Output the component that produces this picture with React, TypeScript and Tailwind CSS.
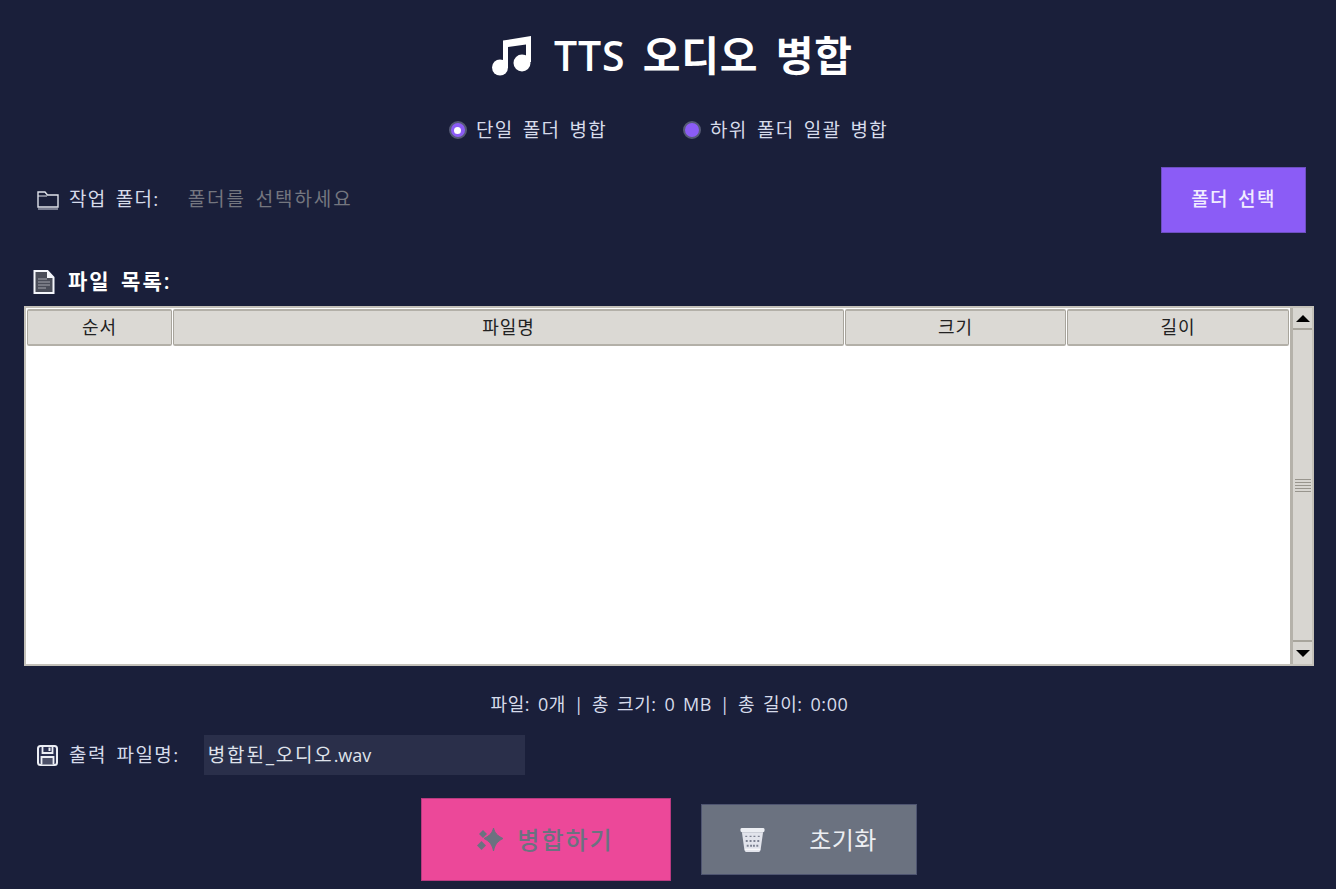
const FONT = "font-['Open_Sans','Noto_Sans_CJK_KR',sans-serif]";
const LABEL = "text-[19px] tracking-[1.3px] [word-spacing:3px]";

function Radio({ label, dot }: { label: string; dot?: boolean }) {
  return (
    <div className="flex items-center gap-[9px]">
      <span className="flex h-[18px] w-[18px] items-center justify-center rounded-full border-2 border-[#565b76] bg-[#8b5cf6]">
        {dot && <span className="h-[7px] w-[7px] rounded-full bg-white" />}
      </span>
      <span className={`${LABEL} leading-[24px] text-[#d6dbea]`}>{label}</span>
    </div>
  );
}

function MusicIcon() {
  return (
    <svg width="41" height="41" viewBox="6 5 41 41" fill="white">
      <path d="M18 10.500 46 6v26h-5V14.500l-18 2.500V38h-5z" />
      <circle cx="15" cy="37.500" r="8" />
      <circle cx="37" cy="33" r="8.500" />
    </svg>
  );
}

function FolderIcon() {
  return (
    <svg width="22" height="20" viewBox="0 0 22 20" fill="none" stroke="#dfe2ea" strokeWidth="1.400">
      <path d="M1 17V2h7l2.500 3H21v12z" />
      <path d="M1 6h9" strokeWidth="1" />
      <path d="M1 19h20" stroke="#8f93a6" strokeWidth="1.600" />
    </svg>
  );
}

function DocIcon() {
  return (
    <svg width="22" height="24" viewBox="0 0 22 24">
      <path d="M1.500 1h13l6 6.500V23h-19z" fill="#4a4d59" stroke="#f4f6fb" strokeWidth="2" />
      <path d="M14 1v7h7" fill="#f4f6fb" />
      <path d="M5 9h9M5 12h12M5 15h12M5 18h8" stroke="#a3a5ae" strokeWidth="1" />
    </svg>
  );
}

function SaveIcon() {
  return (
    <svg width="21" height="21" viewBox="0 0 21 21" fill="none">
      <rect x="1" y="1" width="19" height="19" rx="2.500" fill="#2b3050" stroke="#eceef4" strokeWidth="2" />
      <path d="M5.500 1.500v6.500h10V1.500" stroke="#eceef4" strokeWidth="1.800" />
      <rect x="11.500" y="2.500" width="2" height="3.500" fill="#eceef4" />
      <path d="M4.500 19.500v-7.500h12v7.500" fill="#4c5068" stroke="#eceef4" strokeWidth="1.800" />
    </svg>
  );
}

function SparkleIcon() {
  return (
    <svg width="26" height="23" viewBox="0 0 26 23" fill="#6b7280">
      <path d="M16.500 0c1.200 5 3.600 7.600 9.500 10.500-5.900 2.900-8.300 6.500-9.500 12.500-1.200-6-3.600-9.600-9.500-12.500C12.900 7.600 15.300 5 16.500 0z" stroke="#6b7280" strokeWidth="1" />
      <path d="M6 2l4 4-4 4-4-4z" />
      <path d="M4.500 13l4.500 4.500-4.500 4.500L0 17.500z" />
    </svg>
  );
}

function TrashIcon() {
  return (
    <svg width="25" height="26" viewBox="0 0 26 26">
      <rect x="0.500" y="0.500" width="25" height="4.500" rx="1.500" fill="#eceef3" />
      <path d="M2 5h22l-2.500 17.500q-.3 3-3 3h-11q-2.700 0-3-3z" fill="#e2e4ec" />
      <path d="M6.500 8.500v1.500M11 8.500v1.500M15 8.500v1.500M19.500 8.500v1.500M7 13v2M11 13v2M15 13v2M19 13v2M8 18v2M11.500 18v2M14.500 18v2M18 18v2" stroke="#7d8292" strokeWidth="2" />
      <rect x="5" y="22" width="16" height="1.500" fill="#f8f9fb" />
    </svg>
  );
}

function HeaderCell({ label, width }: { label: string; width: string }) {
  return (
    <div className={`flex h-[37px] items-center justify-center rounded-[2px] border-x border-y-2 border-x-[#a8a59c] border-y-[#b3b0a8] bg-[#dbd9d4] text-[18px] tracking-[1px] text-[#222] ${width}`}>
      {label}
    </div>
  );
}

function ScrollBar() {
  return (
    <div className="flex w-[22px] flex-col border-l-[3px] border-[#b5b2aa] bg-[#d8d6d1]">
      <div className="flex h-[22px] items-center justify-center border-b-2 border-[#a8a59c]">
        <span className="h-0 w-0 border-x-[7px] border-b-[7px] border-x-transparent border-b-black" />
      </div>
      <div className="flex flex-1 flex-col items-center justify-center gap-[2px]">
        <span className="h-px w-[16px] bg-[#98958d]" />
        <span className="h-px w-[16px] bg-[#98958d]" />
        <span className="h-px w-[16px] bg-[#98958d]" />
        <span className="h-px w-[16px] bg-[#98958d]" />
        <span className="h-px w-[16px] bg-[#98958d]" />
      </div>
      <div className="flex h-[24px] items-center justify-center border-t-2 border-[#a8a59c]">
        <span className="h-0 w-0 border-x-[7px] border-t-[7px] border-x-transparent border-t-black" />
      </div>
    </div>
  );
}

export default function App() {
  return (
    <div className={`h-[889px] w-[1336px] overflow-hidden bg-[#1a1f3a] ${FONT}`}>
      <div className="flex h-[110px] items-center justify-center gap-[22px] pl-[8px]">
        <MusicIcon />
        <h1 className="text-[41px] font-semibold leading-[44px] tracking-[0.8px] [word-spacing:6px] text-white">TTS 오디오 병합</h1>
      </div>

      <div className="flex h-[40px] items-center justify-center gap-[76px] pl-[1px]">
        <Radio label="단일 폴더 병합" dot />
        <Radio label="하위 폴더 일괄 병합" />
      </div>

      <div className="mt-[17px] flex h-[65px] items-center pl-[37px] pr-[30px]">
        <FolderIcon />
        <span className={`ml-[10px] ${LABEL} text-[#d6dbea]`}>작업 폴더:</span>
        <span className="ml-[28px] text-[19px] tracking-[1.9px] [word-spacing:3px] text-[#74767f]">폴더를 선택하세요</span>
        <button className={`ml-auto h-[66px] w-[145px] border border-[#6d4fc0] bg-[#8b5cf6] ${LABEL} font-medium text-[#f1ecff]`}>
          폴더 선택
        </button>
      </div>

      <div className="mt-[34px] flex h-[32px] items-center gap-[13px] pl-[33px]">
        <DocIcon />
        <span className="text-[21px] font-semibold tracking-[2px] [word-spacing:3px] text-white">파일 목록:</span>
      </div>

      <div className="ml-[24px] mr-[22px] mt-[8px] flex h-[360px] border-2 border-[#c4c1b9] bg-white">
        <div className="flex-1 bg-white pl-px pt-px">
          <div className="flex gap-px">
            <HeaderCell label="순서" width="w-[145px]" />
            <HeaderCell label="파일명" width="w-[671px]" />
            <HeaderCell label="크기" width="w-[221px]" />
            <HeaderCell label="길이" width="w-[222px]" />
          </div>
        </div>
        <ScrollBar />
      </div>

      <div className="flex h-[76px] items-center justify-center pl-[3px] text-[18px] tracking-[0.6px] [word-spacing:2.500px] text-[#d6dbea]">
        파일: 0개 | 총 크기: 0 MB | 총 길이: 0:00
      </div>

      <div className="-mt-[7px] flex h-[40px] items-center pl-[37px]">
        <SaveIcon />
        <span className="ml-[11px] text-[19px] tracking-[1.5px] [word-spacing:3px] text-[#d6dbea]">출력 파일명:</span>
        <div className="ml-[24px] flex h-[40px] w-[321px] items-center bg-[#2a2f4a] pl-[4px] text-[18px] text-[#dfe2ea]">
          <span className="text-[19px] tracking-[1.800px]">병합된_오디오</span>.wav
        </div>
      </div>

      <div className="mt-[23px] flex items-center justify-center gap-[30px] pl-[1px]">
        <button className="flex h-[83px] w-[250px] items-center justify-center gap-[14px] border border-[#b83a80] bg-[#ec4899] text-[24px] font-medium tracking-[2px] text-[#6b7280]">
          <SparkleIcon />
          병합하기
        </button>
        <button className="flex h-[71px] w-[216px] items-center justify-center gap-[44px] border border-[#4e5470] bg-[#6b7280] text-[24px] tracking-[0.5px] text-[#eceef2]">
          <TrashIcon />
          초기화
        </button>
      </div>
    </div>
  );
}
